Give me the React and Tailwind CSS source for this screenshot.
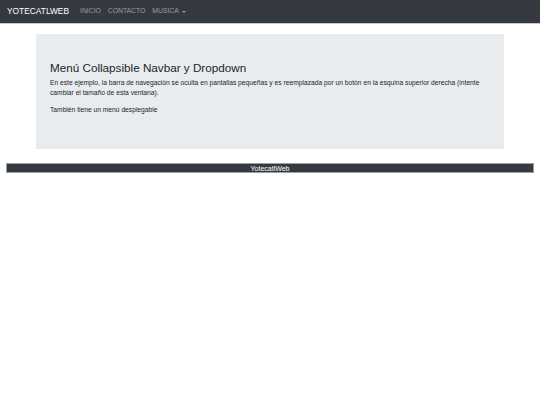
export default function App() {
  return (
    <div className="min-h-screen bg-white font-['Liberation_Sans',Arial,sans-serif]">
      {/* Navbar */}
      <nav className="flex h-6 items-center border-b border-[#c8c8c8] bg-[#343a40] px-[7px]">
        <span className="mr-[11px] text-[8.4px] leading-none text-white">YOTECATLWEB</span>
        <ul className="flex items-center gap-[7px] text-[6.8px] leading-none text-[#9a9da0]">
          <li>INICIO</li>
          <li>CONTACTO</li>
          <li className="flex items-center gap-[3px]">
            MUSICA
            <span className="mt-[1px] border-x-[2px] border-t-[2px] border-x-transparent border-t-[#9a9da0]"></span>
          </li>
        </ul>
      </nav>

      {/* Jumbotron */}
      <div className="px-9 pt-[10px]">
        <div className="h-[115px] bg-[#e9ecef] px-[14px] pt-[27px] text-[#212529]">
          <h1 className="text-[11.7px] leading-[14px]">Menú Collapsible Navbar y Dropdown</h1>
          <p className="mt-[3px] text-[6.7px] leading-[10px]">
            En este ejemplo, la barra de navegación se oculta en pantallas pequeñas y es reemplazada por un botón en la esquina superior derecha (intente cambiar el tamaño de esta ventana).
          </p>
          <p className="mt-[7px] text-[6.7px] leading-[10px]">También tiene un menú desplegable</p>
        </div>
      </div>

      {/* Footer */}
      <div className="px-[6px] pt-[14px]">
        <footer className="flex h-[10px] items-center justify-center border border-[#9aa0a6] bg-[#343a40] text-[7px] leading-none text-white">
          YotecatlWeb
        </footer>
      </div>
    </div>
  );
}
